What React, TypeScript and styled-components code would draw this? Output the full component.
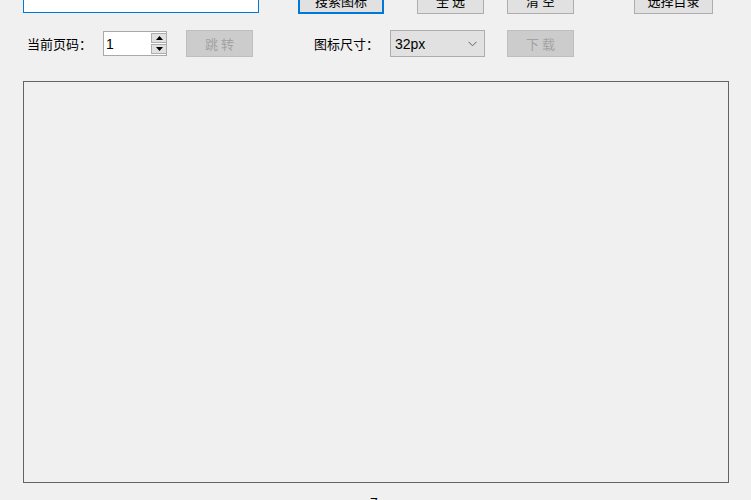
import React from "react";
import styled, { createGlobalStyle } from "styled-components";

const Global = createGlobalStyle`
  html, body { margin: 0; padding: 0; background: #f0f0f0; overflow: hidden; }
  * { box-sizing: border-box; }
`;

const CJK = `"Noto Sans CJK SC", "Noto Sans", sans-serif`;
const LATIN = `"Liberation Sans", Arial, sans-serif`;

const Form = styled.div`
  width: 751px;
  height: 500px;
  overflow: hidden;
  background: #f0f0f0;
  padding-left: 23px;
  display: flex;
  flex-direction: column;
`;

const Row = styled.div<{ $top: number; $h: number }>`
  display: flex;
  align-items: center;
  height: ${(p) => p.$h}px;
  margin-top: ${(p) => p.$top}px;
  flex-shrink: 0;
`;

const TextBox = styled.div<{ $w: number }>`
  width: ${(p) => p.$w}px;
  height: 23px;
  margin-top: 2px;
  background: #fff;
  border: 1px solid #0078d7;
`;

const Button = styled.button<{ $w: number; $ml: number; $focused?: boolean }>`
  width: ${(p) => p.$w}px;
  height: 27px;
  margin-left: ${(p) => p.$ml}px;
  padding: 0;
  background: ${(p) => (p.disabled ? "#cccccc" : "#e1e1e1")};
  border: ${(p) =>
    p.$focused ? "2px solid #0078d7" : p.disabled ? "1px solid #bfbfbf" : "1px solid #adadad"};
  color: ${(p) => (p.disabled ? "#a3a3a3" : "#000")};
  font-family: ${CJK};
  font-size: 13px;
  line-height: 1;
  white-space: pre;
  display: flex;
  align-items: center;
  justify-content: center;
  flex-shrink: 0;
`;

const Label = styled.span<{ $ml: number; $w: number }>`
  margin-left: ${(p) => p.$ml}px;
  width: ${(p) => p.$w}px;
  font-family: ${CJK};
  font-size: 13px;
  color: #000;
  white-space: pre;
  flex-shrink: 0;
`;

const Spinner = styled.div`
  width: 64px;
  height: 25px;
  background: #fff;
  border: 1px solid #a9a9a9;
  display: flex;
  align-items: center;
  flex-shrink: 0;
`;

const SpinValue = styled.span`
  flex: 1;
  padding-left: 2px;
  font-family: ${LATIN};
  font-size: 14px;
  color: #000;
`;

const SpinButtons = styled.div`
  width: 16px;
  height: 23px;
  display: flex;
  flex-direction: column;
  gap: 1px;
  padding: 1px 0;
  margin-right: -1px;
`;

const SpinButton = styled.div`
  flex: 1;
  background: #e1e1e1;
  border: 1px solid #adadad;
  display: flex;
  align-items: center;
  justify-content: center;
`;

const Combo = styled.div<{ $ml: number }>`
  width: 95px;
  height: 27px;
  margin-left: ${(p) => p.$ml}px;
  background: #e1e1e1;
  border: 1px solid #adadad;
  display: flex;
  align-items: center;
  padding: 0 7px 0 4px;
  flex-shrink: 0;
`;

const ComboText = styled.span`
  flex: 1;
  font-family: ${LATIN};
  font-size: 14px;
  color: #000;
`;

const Panel = styled.div`
  width: 706px;
  height: 402px;
  margin-top: 24px;
  border: 1px solid #646464;
  background: #f0f0f0;
  flex-shrink: 0;
`;

const Status = styled.div`
  margin-top: 12px;
  margin-left: 347px;
  font-family: ${LATIN};
  font-size: 14px;
  line-height: 16px;
  color: #000;
`;

const Arrow = ({ up }: { up?: boolean }) => (
  <svg width="7" height="4" viewBox="0 0 7 4">
    <path d={up ? "M0 4 L3.5 0 L7 4 Z" : "M0 0 L7 0 L3.5 4 Z"} fill="#000" />
  </svg>
);

const Chevron = () => (
  <svg width="9" height="6" viewBox="0 0 9 6">
    <path d="M0.5 0.8 L4.5 4.8 L8.5 0.8" fill="none" stroke="#606060" strokeWidth="1" />
  </svg>
);

export default function App() {
  return (
    <>
      <Global />
      <Form>
        <Row $top={-13} $h={27}>
          <TextBox $w={236} />
          <Button $w={86} $ml={39} $focused>搜索图标</Button>
          <Button $w={67} $ml={33}>全 选</Button>
          <Button $w={67} $ml={23}>清 空</Button>
          <Button $w={79} $ml={60}>选择目录</Button>
        </Row>
        <Row $top={16} $h={27}>
          <Label $ml={4} $w={76}>当前页码：</Label>
          <Spinner>
            <SpinValue>1</SpinValue>
            <SpinButtons>
              <SpinButton><Arrow up /></SpinButton>
              <SpinButton><Arrow /></SpinButton>
            </SpinButtons>
          </Spinner>
          <Button $w={67} $ml={19} disabled>跳 转</Button>
          <Label $ml={61} $w={76}>图标尺寸：</Label>
          <Combo $ml={0}>
            <ComboText>32px</ComboText>
            <Chevron />
          </Combo>
          <Button $w={67} $ml={22} disabled>下 载</Button>
        </Row>
        <Panel />
        <Status>7</Status>
      </Form>
    </>
  );
}
